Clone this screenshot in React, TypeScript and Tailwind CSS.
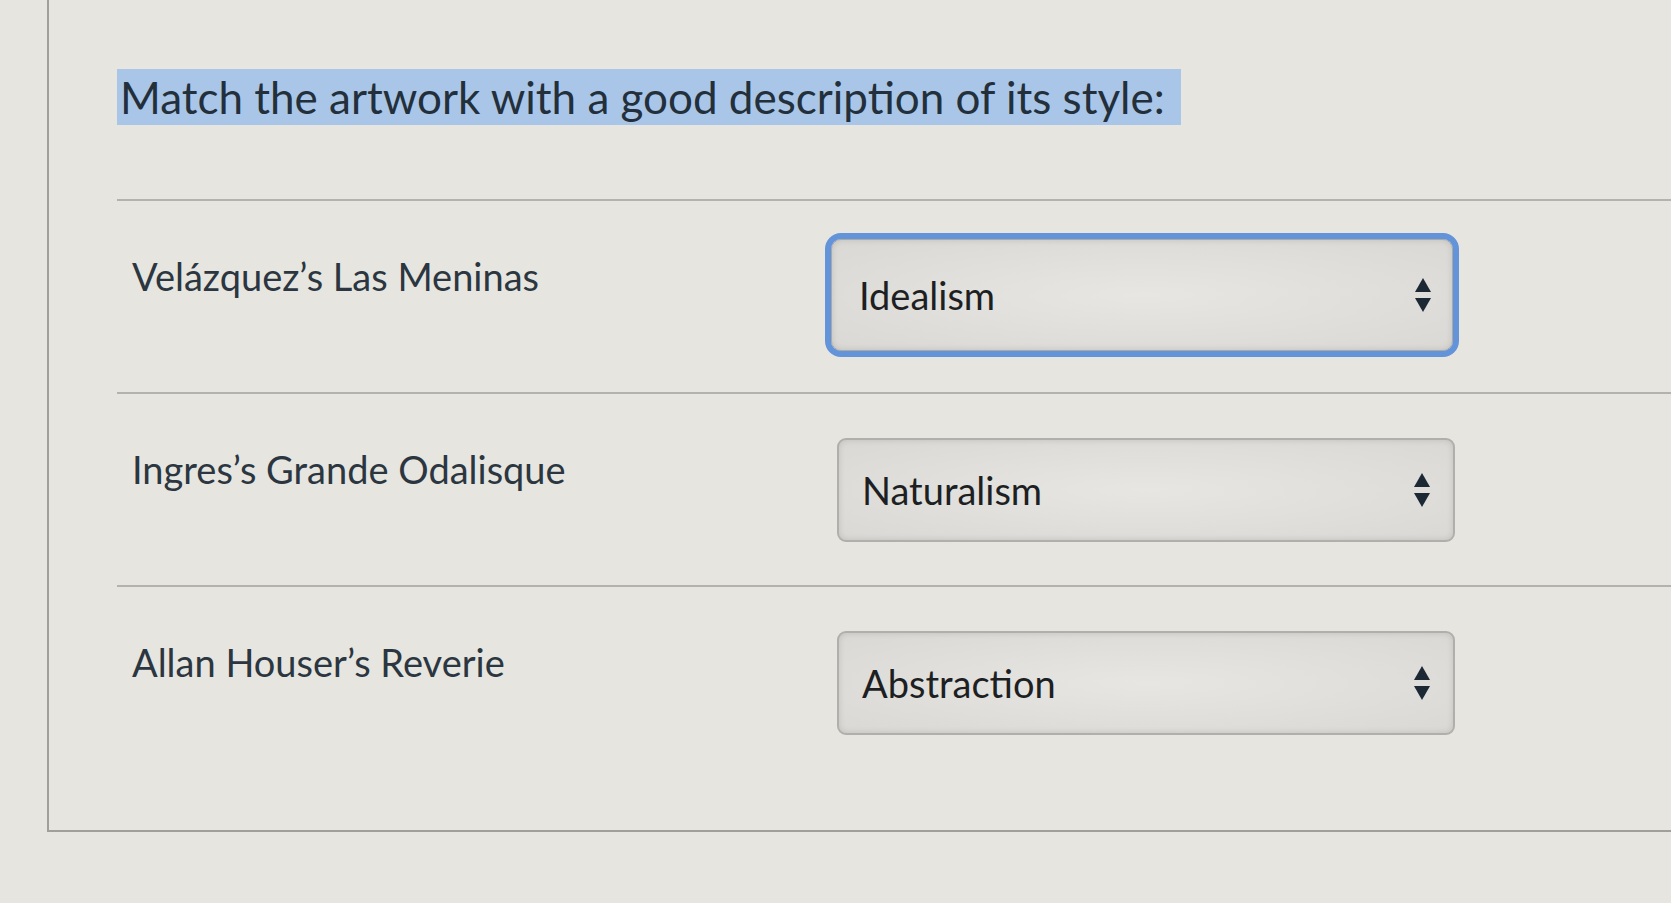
import React from "react";

const rows = [
  { label: "Velázquez’s Las Meninas", value: "Idealism", focused: true },
  { label: "Ingres’s Grande Odalisque", value: "Naturalism", focused: false },
  { label: "Allan Houser’s Reverie", value: "Abstraction", focused: false },
];

const Arrows = () => (
  <svg width="18" height="36" viewBox="0 0 18 36" className="shrink-0">
    <polygon points="9,1 17,15 1,15" fill="#1c2833" />
    <polygon points="1,21 17,21 9,35" fill="#1c2833" />
  </svg>
);

const FakeSelect = ({ value, focused }: { value: string; focused: boolean }) => (
  <div
    className={
      focused
        ? "w-[622px] h-[112px] -mt-[6px] -ml-[6px] flex items-center justify-between pl-[27px] pr-[20px] rounded-[10px] border border-[#a9a9a6] bg-[radial-gradient(ellipse_at_center,#e7e6e3_0%,#d9d8d5_100%)] shadow-[inset_0_0_6px_rgba(0,0,0,0.12)] outline-6 outline-solid outline-[#6393d9] outline-offset-0"
        : "w-[618px] h-[104px] flex items-center justify-between pl-[23px] pr-[22px] rounded-[9px] border-2 border-[#b0afab] bg-[radial-gradient(ellipse_at_center,#e7e6e3_0%,#d9d8d5_100%)] shadow-[inset_0_0_6px_rgba(0,0,0,0.12)]"
    }
  >
    <span className="text-[38px] text-[#1d1f22]">{value}</span>
    <Arrows />
  </div>
);

export default function App() {
  return (
    <div className="min-h-screen w-full bg-[#e6e5e0] pl-[47px] font-['Lato','Liberation_Sans',sans-serif] overflow-hidden">
      <div className="h-[832px] flex flex-col border-l-2 border-b-2 border-[#a09f9b] pl-[68px] pt-[69px]">
        <h1 className="text-[44px] leading-[56px] text-[#23303b]">
          <span className="inline-block bg-[#a9c6e8] pl-[3px] pr-[16px]">
            Match the artwork with a good description of its style:
          </span>
        </h1>

        <div className="mt-[74px] flex flex-1 flex-col">
          {rows.map((row, i) => (
            <div
              key={row.label}
              className={
                "flex items-start border-t-2 border-[#b3b2ae] pl-[15px] pt-[44px] " +
                (i === rows.length - 1 ? "flex-1" : "h-[193px]")
              }
            >
              <div className="w-[705px] mt-[8px] text-[38px] leading-[46px] text-[#2b3640]">
                {row.label}
              </div>
              <FakeSelect value={row.value} focused={row.focused} />
            </div>
          ))}
        </div>
      </div>
    </div>
  );
}
